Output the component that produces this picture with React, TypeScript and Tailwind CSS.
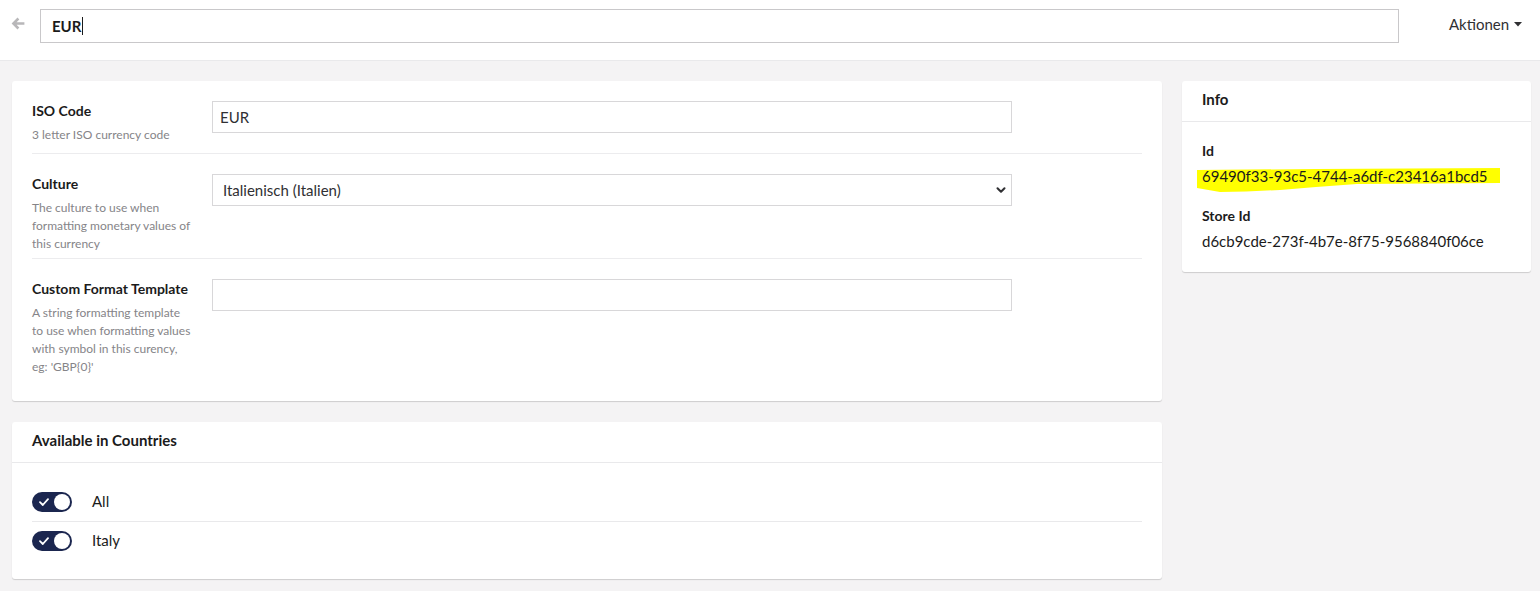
import { ChevronDown } from 'lucide-react'

const fields = [
  {
    label: 'ISO Code',
    description: '3 letter ISO currency code',
    kind: 'input',
    value: 'EUR',
    pad: 'pb-[9px]',
  },
  {
    label: 'Culture',
    description: 'The culture to use when formatting monetary values of this currency',
    kind: 'select',
    value: 'Italienisch (Italien)',
    pad: 'pb-[5px]',
  },
  {
    label: 'Custom Format Template',
    description: "A string formatting template to use when formatting values with symbol in this curency, eg: 'GBP{0}'",
    kind: 'input',
    value: '',
    pad: 'pb-[5px]',
  },
]

const countries = ['All', 'Italy']

function Toggle() {
  return (
    <div className="flex h-[20px] w-[40px] items-center justify-between rounded-full bg-[#1b264f] pl-[7px] pr-[2px]">
      <svg width="10" height="8" viewBox="0 0 10 8" fill="none">
        <path d="M1 4.2 L3.8 7 L9 1.2" stroke="white" strokeWidth="1.8" strokeLinecap="round" strokeLinejoin="round" />
      </svg>
      <div className="h-[16px] w-[16px] rounded-full bg-white" />
    </div>
  )
}

export default function App() {
  return (
    <div className="min-h-screen bg-[#f4f3f4] font-['Lato',sans-serif] text-[#1b1b1b]">
      {/* header */}
      <div className="flex h-[61px] items-start border-b border-[#e9e9eb] bg-white">
        <div className="flex h-[47px] w-[40px] items-center justify-center pr-[4px]">
          <svg width="14" height="13" viewBox="0 0 14 13">
            <path d="M6.5 0.6 L8.3 2.4 L5.6 5.2 L13.4 5.2 L13.4 7.8 L5.6 7.8 L8.3 10.6 L6.5 12.4 L0.6 6.5 Z" fill="#b8b7b9" />
          </svg>
        </div>
        <div className="mt-[9px] flex h-[34px] w-[1359px] items-center border border-[#c9c8ca] bg-white px-[11px]">
          <span className="text-[15px] font-bold text-[#1b1b1b]">EUR</span>
          <span className="ml-[1px] h-[18px] w-[1px] bg-[#1b1b1b]" />
        </div>
        <div className="ml-[50px] mt-[13px] flex items-center gap-[5px] text-[15px] text-[#303033]">
          <span>Aktionen</span>
          <svg width="8" height="5" viewBox="0 0 8 5">
            <path d="M0 0 L8 0 L4 4.5 Z" fill="#303033" />
          </svg>
        </div>
      </div>

      {/* content */}
      <div className="flex items-start gap-[20px] pl-[12px] pr-[9px] pt-[20px]">
        <div className="flex flex-1 flex-col gap-[21px]">
          <div className="rounded-[3px] bg-white px-[20px] py-[20px] shadow-[0_1px_1px_rgba(0,0,0,0.16)]">
            {fields.map((f, i) => (
              <div
                key={f.label}
                className={`flex gap-[20px] ${f.pad} ${i > 0 ? 'pt-[20px]' : ''} ${i < fields.length - 1 ? 'border-b border-[#ececee]' : ''}`}
              >
                <div className="w-[160px] shrink-0">
                  <div className="text-[14px] font-bold leading-[20px] text-[#1b1b1b]">{f.label}</div>
                  <div className="mt-[5px] text-[12px] leading-[18px] text-[#858488]">{f.description}</div>
                </div>
                {f.kind === 'select' ? (
                  <div className="flex h-[32px] w-[800px] items-center justify-between border border-[#d8d7d9] pl-[10px] pr-[3px] text-[15px] text-[#303033]">
                    <span>{f.value}</span>
                    <ChevronDown size={14} strokeWidth={3.5} className="text-[#303033]" />
                  </div>
                ) : (
                  <div className="flex h-[32px] w-[800px] items-center border border-[#d8d7d9] px-[7px] text-[15px] text-[#303033]">
                    {f.value}
                  </div>
                )}
              </div>
            ))}
          </div>

          <div className="rounded-[3px] bg-white shadow-[0_1px_1px_rgba(0,0,0,0.16)]">
            <div className="flex h-[41px] items-center border-b border-[#e9e9eb] px-[20px] pb-[4px] text-[15px] font-bold">
              Available in Countries
            </div>
            <div className="px-[20px] pb-[20px] pt-[19px]">
              {countries.map((c, i) => (
                <div
                  key={c}
                  className={`flex items-center gap-[20px] ${i === 0 ? 'h-[40px] border-b border-[#e9e9eb]' : 'h-[37px]'}`}
                >
                  <Toggle />
                  <span className="text-[15px] text-[#1b1b1b]">{c}</span>
                </div>
              ))}
            </div>
          </div>
        </div>

        <div className="w-[349px] rounded-[3px] bg-white shadow-[0_1px_1px_rgba(0,0,0,0.16)]">
          <div className="flex h-[41px] items-center border-b border-[#e9e9eb] px-[20px] pb-[4px] text-[15px] font-bold">
            Info
          </div>
          <div className="flex flex-col px-[20px] pb-[21px] pt-[19px] text-[15px] leading-[20px]">
            <div className="text-[14px] font-bold">Id</div>
            <div className="relative mt-[5px]">
              <svg className="absolute left-[-6px] top-[2px]" width="306" height="26" viewBox="0 0 306 26">
                <path d="M1 2 L120 1 L304 0 L304 15 L230 15.5 L161 16 L120 19 L84 22 L50 23.5 L24 24 L1 20 Z" fill="#ffff00" />
              </svg>
              <span className="relative text-[#1b1b1b]">69490f33-93c5-4744-a6df-c23416a1bcd5</span>
            </div>
            <div className="mt-[20px] text-[14px] font-bold">Store Id</div>
            <div className="mt-[5px]">d6cb9cde-273f-4b7e-8f75-9568840f06ce</div>
          </div>
        </div>
      </div>
    </div>
  )
}
